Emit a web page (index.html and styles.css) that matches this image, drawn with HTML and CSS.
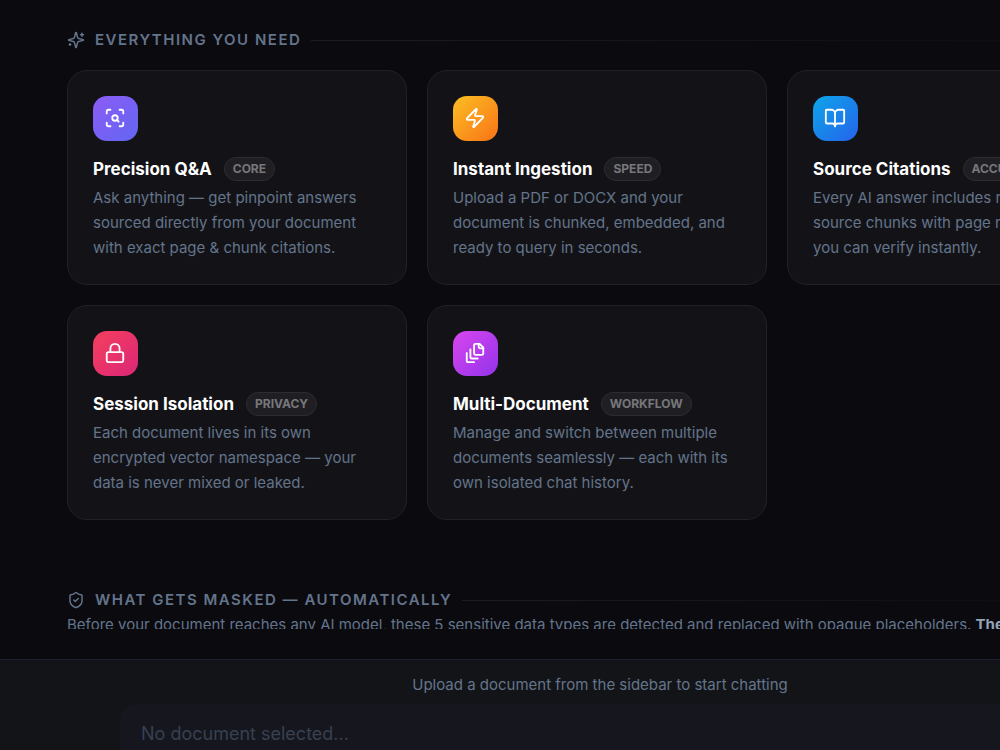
FILE: index.html
```html
<!DOCTYPE html>
<html lang="en">
<head>
    <meta charset="UTF-8">
    <meta name="viewport" content="width=device-width, initial-scale=1.0">
    <title>Document Chat</title>
    <link rel="stylesheet" href="styles.css">
</head>
<body>
    <div class="app">
        <main class="content">
            <div class="container">
                <section class="section">
                    <div class="section-header">
                        <svg class="section-icon" viewBox="0 0 24 24"><path d="M9.937 15.5A2 2 0 0 0 8.5 14.063l-6.135-1.582a.5.5 0 0 1 0-.962L8.5 9.936A2 2 0 0 0 9.937 8.5l1.582-6.135a.5.5 0 0 1 .963 0L14.063 8.5A2 2 0 0 0 15.5 9.937l6.135 1.581a.5.5 0 0 1 0 .964L15.5 14.063a2 2 0 0 0-1.437 1.437l-1.582 6.135a.5.5 0 0 1-.963 0z"/><path d="M20 3v4"/><path d="M22 5h-4"/><path d="M4 17v2"/><path d="M5 18H3"/></svg>
                        <h2>Everything you need</h2>
                        <span class="line"></span>
                    </div>
                    <div class="cards">
                        <article class="card">
                            <div class="card-icon violet">
                                <svg viewBox="0 0 24 24"><path d="M3 7V5a2 2 0 0 1 2-2h2"/><path d="M17 3h2a2 2 0 0 1 2 2v2"/><path d="M21 17v2a2 2 0 0 1-2 2h-2"/><path d="M7 21H5a2 2 0 0 1-2-2v-2"/><circle cx="12" cy="12" r="3"/><path d="m16 16-1.9-1.9"/></svg>
                            </div>
                            <div class="card-title"><h3>Precision Q&amp;A</h3><span class="badge">Core</span></div>
                            <p>Ask anything — get pinpoint answers sourced directly from your document with exact page &amp; chunk citations.</p>
                        </article>
                        <article class="card">
                            <div class="card-icon orange">
                                <svg viewBox="0 0 24 24"><path d="M4 14a1 1 0 0 1-.78-1.63l9.9-10.2a.5.5 0 0 1 .86.46l-1.92 6.02A1 1 0 0 0 13 10h7a1 1 0 0 1 .78 1.63l-9.9 10.2a.5.5 0 0 1-.86-.46l1.92-6.02A1 1 0 0 0 11 14z"/></svg>
                            </div>
                            <div class="card-title"><h3>Instant Ingestion</h3><span class="badge">Speed</span></div>
                            <p>Upload a PDF or DOCX and your document is chunked, embedded, and ready to query in seconds.</p>
                        </article>
                        <article class="card">
                            <div class="card-icon blue">
                                <svg viewBox="0 0 24 24"><path d="M12 7v14"/><path d="M3 18a1 1 0 0 1-1-1V4a1 1 0 0 1 1-1h5a4 4 0 0 1 4 4 4 4 0 0 1 4-4h5a1 1 0 0 1 1 1v13a1 1 0 0 1-1 1h-6a3 3 0 0 0-3 3 3 3 0 0 0-3-3z"/></svg>
                            </div>
                            <div class="card-title"><h3>Source Citations</h3><span class="badge">Accuracy</span></div>
                            <p>Every AI answer includes referenced source chunks with page numbers so you can verify instantly.</p>
                        </article>
                        <article class="card">
                            <div class="card-icon pink">
                                <svg viewBox="0 0 24 24"><rect width="18" height="11" x="3" y="11" rx="2" ry="2"/><path d="M7 11V7a5 5 0 0 1 10 0v4"/></svg>
                            </div>
                            <div class="card-title"><h3>Session Isolation</h3><span class="badge">Privacy</span></div>
                            <p>Each document lives in its own encrypted vector namespace — your data is never mixed or leaked.</p>
                        </article>
                        <article class="card">
                            <div class="card-icon purple">
                                <svg viewBox="0 0 24 24"><path d="M21 7h-3a2 2 0 0 1-2-2V2"/><path d="M21 6v6.5c0 .8-.7 1.5-1.5 1.5h-7c-.8 0-1.5-.7-1.5-1.5v-9c0-.8.7-1.5 1.5-1.5H17Z"/><path d="M7 8v8.8c0 .3.2.6.4.8.2.2.5.4.8.4H15"/><path d="M3 12v8.8c0 .3.2.6.4.8.2.2.5.4.8.4H11"/></svg>
                            </div>
                            <div class="card-title"><h3>Multi-Document</h3><span class="badge">Workflow</span></div>
                            <p>Manage and switch between multiple documents seamlessly — each with its own isolated chat history.</p>
                        </article>
                    </div>
                </section>

                <section class="section">
                    <div class="section-header">
                        <svg class="section-icon" viewBox="0 0 24 24"><path d="M20 13c0 5-3.5 7.5-7.66 8.95a1 1 0 0 1-.67-.01C7.5 20.5 4 18 4 13V6a1 1 0 0 1 1-1c2 0 4.5-1.2 6.24-2.72a1.17 1.17 0 0 1 1.52 0C14.51 3.81 17 5 19 5a1 1 0 0 1 1 1z"/><path d="m9 12 2 2 4-4"/></svg>
                        <h2>What gets masked — automatically</h2>
                        <span class="line"></span>
                    </div>
                    <p class="section-text">Before your document reaches any AI model, these 5 sensitive data types are detected and replaced with opaque placeholders. <strong>The AI never sees them.</strong></p>
                </section>
            </div>
        </main>

        <footer class="chat-bar">
            <label for="message">Upload a document from the sidebar to start chatting</label>
            <input type="text" id="message" placeholder="No document selected..." disabled>
        </footer>
    </div>
</body>
</html>
```
FILE: styles.css
```css
* {
    box-sizing: border-box;
    margin: 0;
    padding: 0;
}
body {
    background: #0a0a0f;
    color: #64748b;
    font-family: Inter, sans-serif;
    font-size: 15px;
    line-height: 24px;
    overflow: hidden;
}
.app {
    display: flex;
    flex-direction: column;
    min-width: 1200px;
    height: calc(100vh + 32px);
}

/* Scrolling content */
.content {
    flex: 1;
    min-height: 0;
    margin-bottom: 30px;
    padding: 28px 73px 0 67px;
    overflow: hidden;
}
.container {
    max-width: 1060px;
    margin: 0 auto;
}
.section {
    margin-bottom: 68px;
}
.section-header {
    display: flex;
    align-items: center;
    gap: 10px;
}
.section-header h2 {
    font-size: 15px;
    font-weight: 600;
    letter-spacing: 1.5px;
    text-transform: uppercase;
}
.line {
    flex: 1;
    height: 1px;
    background: linear-gradient(90deg, rgba(255, 255, 255, 0.08), transparent);
}
svg {
    fill: none;
    stroke: currentColor;
    stroke-width: 2;
    stroke-linecap: round;
    stroke-linejoin: round;
}
.section-icon {
    width: 18px;
    height: 18px;
}
.section-text {
    line-height: 25px;
    white-space: nowrap;
}
.section-text strong {
    color: #94a3b8;
}

/* Feature cards */
.cards {
    display: grid;
    grid-template-columns: repeat(3, 1fr);
    gap: 20px;
    margin-top: 18px;
}
.card {
    padding: 25px 25px 24px;
    background: #131317;
    border: 1px solid #222226;
    border-radius: 20px;
}
.card p {
    line-height: 25px;
}
.card-icon {
    width: 45px;
    height: 45px;
    margin-bottom: 16px;
    padding: 11px;
    border-radius: 14px;
    color: #fff;
}
.card-icon svg {
    display: block;
    width: 22px;
    height: 22px;
}
.violet {
    background: linear-gradient(135deg, #8b5cf6, #6366f1);
}
.orange {
    background: linear-gradient(135deg, #fbbf24, #f97316);
}
.blue {
    background: linear-gradient(135deg, #0ea5e9, #2563eb);
}
.pink {
    background: linear-gradient(135deg, #f43f5e, #db2777);
}
.purple {
    background: linear-gradient(135deg, #d946ef, #9333ea);
}
.card-title {
    display: flex;
    align-items: center;
    gap: 12px;
    margin-bottom: 4px;
}
.card-title h3 {
    color: #fff;
    font-size: 17px;
    font-weight: 700;
}
.badge {
    padding: 0 8px;
    background: #1f1f23;
    border: 1px solid #2d2d31;
    border-radius: 12px;
    color: #77777b;
    font-size: 12px;
    font-weight: 700;
    line-height: 22px;
    text-transform: uppercase;
}

/* Message box */
.chat-bar {
    display: flex;
    flex-direction: column;
    align-items: center;
    gap: 7px;
    padding: 13px 24px 20px;
    background: #131418;
    border-top: 1px solid #1e1e2e;
}
.chat-bar input {
    width: 100%;
    max-width: 960px;
    height: 58px;
    padding: 0 20px;
    background: #16161e;
    border: 1px solid #17171f;
    border-radius: 16px;
    font-family: inherit;
    font-size: 18px;
}
.chat-bar input::placeholder {
    color: #374151;
}
```
